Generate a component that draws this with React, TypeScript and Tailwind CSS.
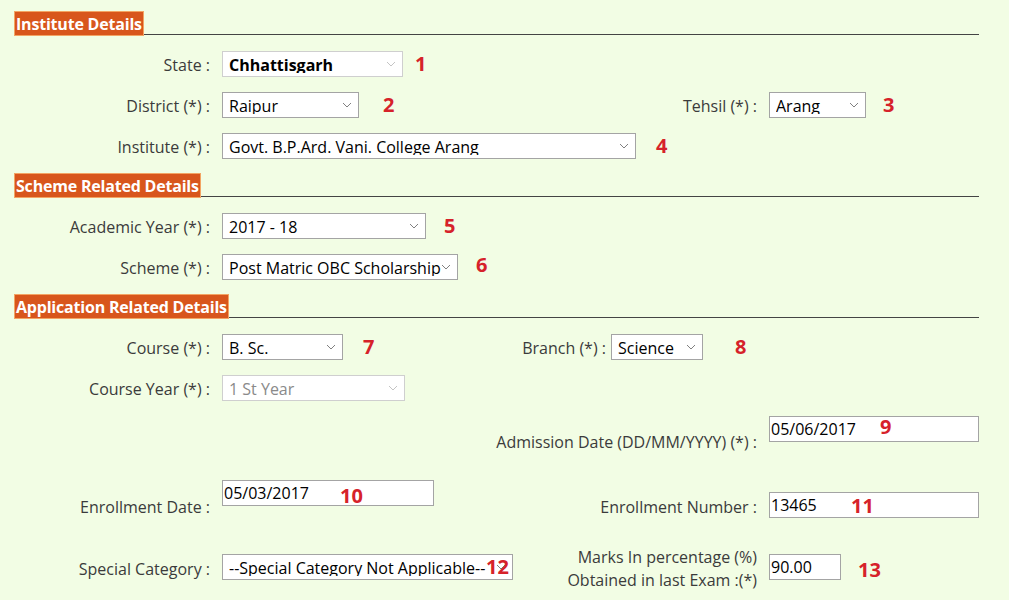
import React from 'react';

const FONT = { fontFamily: '"Open Sans", "Noto Sans", sans-serif' };

function SectionHeader({ title }: { title: string }) {
  return (
    <div className="flex items-end pl-[14px] pr-[30px]">
      <div className="h-[25px] px-[1px] flex items-center bg-[#d8561c] border border-[#f3a463] text-white font-bold text-[16px] tracking-[-0.2px] whitespace-nowrap">
        {title}
      </div>
      <div className="flex-1 border-b border-[#444] mb-[1px]" />
    </div>
  );
}

function Num({ n, className = '' }: { n: string; className?: string }) {
  return <span className={`text-[#d6222a] font-bold text-[20px] leading-none ${className}`}>{n}</span>;
}

function Select({
  value,
  width,
  bold = false,
  disabled = false,
  light = false,
}: {
  value: string;
  width: number;
  bold?: boolean;
  disabled?: boolean;
  light?: boolean;
}) {
  return (
    <div className="relative shrink-0" style={{ width }}>
      <select
        disabled={disabled}
        defaultValue={value}
        className={`appearance-none w-full h-[26px] pl-[6px] pr-[14px] pt-[1px] text-[16px] leading-none bg-white border outline-none ${
          light || disabled ? 'border-[#cfcfcf]' : 'border-[#a4a4a4]'
        } ${disabled ? 'text-[#8a8a8a] bg-[#f7f7f7]' : 'text-black'} ${bold ? 'font-bold' : ''}`}
        style={FONT}
      >
        <option>{value}</option>
      </select>
      <svg
        className="absolute right-[7px] top-[10px] pointer-events-none"
        width="10"
        height="6"
        viewBox="0 0 10 6"
      >
        <path d="M1 1 L5 5 L9 1" fill="none" stroke={light || disabled ? '#c4c4c4' : '#808080'} strokeWidth="1" />
      </svg>
    </div>
  );
}

function TextBox({ value, width }: { value: string; width: number }) {
  return (
    <input
      defaultValue={value}
      className="h-[26px] px-[1px] text-[16px] text-black bg-white border border-[#a4a4a4] outline-none shrink-0"
      style={{ ...FONT, width }}
    />
  );
}

function Label({ children, width = 210 }: { children: React.ReactNode; width?: number }) {
  return (
    <div className="shrink-0 text-right text-[16px] text-[#3b3b3b] whitespace-nowrap pt-[1px]" style={{ width }}>
      {children}
    </div>
  );
}

export default function App() {
  return (
    <div className="w-[1009px] h-[600px] overflow-hidden bg-[#f2fde4] pt-[11px]" style={FONT}>
      <SectionHeader title="Institute Details" />

      <div className="flex items-center mt-[15px] h-[26px]">
        <Label>State :</Label>
        <div className="ml-[12px] flex items-center">
          <Select value="Chhattisgarh" width={181} bold light />
          <Num n="1" className="ml-[12px]" />
        </div>
      </div>

      <div className="flex items-center mt-[15px] h-[26px]">
        <Label>District (*) :</Label>
        <div className="ml-[12px] flex items-center w-[323px]">
          <Select value="Raipur" width={137} />
          <Num n="2" className="ml-[24px]" />
        </div>
        <Label width={212}>Tehsil (*) :</Label>
        <div className="ml-[12px] flex items-center">
          <Select value="Arang" width={97} />
          <Num n="3" className="ml-[17px]" />
        </div>
      </div>

      <div className="flex items-center mt-[15px] h-[26px]">
        <Label>Institute (*) :</Label>
        <div className="ml-[12px] flex items-center">
          <Select value="Govt. B.P.Ard. Vani. College Arang" width={414} />
          <Num n="4" className="ml-[20px]" />
        </div>
      </div>

      <div className="mt-[14px]">
        <SectionHeader title="Scheme Related Details" />
      </div>

      <div className="flex items-center mt-[15px] h-[26px]">
        <Label>Academic Year (*) :</Label>
        <div className="ml-[12px] flex items-center">
          <Select value="2017 - 18" width={204} />
          <Num n="5" className="ml-[18px]" />
        </div>
      </div>

      <div className="flex items-center mt-[15px] h-[26px]">
        <Label>Scheme (*) :</Label>
        <div className="ml-[12px] flex items-center">
          <Select value="Post Matric OBC Scholarship" width={236} />
          <Num n="6" className="ml-[18px] -mt-[4px]" />
        </div>
      </div>

      <div className="mt-[14px]">
        <SectionHeader title="Application Related Details" />
      </div>

      <div className="flex items-center mt-[15px] h-[26px]">
        <Label>Course (*) :</Label>
        <div className="ml-[12px] flex items-center w-[264px]">
          <Select value="B. Sc." width={121} />
          <Num n="7" className="ml-[20px]" />
        </div>
        <Label width={120}>Branch (*) :</Label>
        <div className="ml-[5px] flex items-center">
          <Select value="Science" width={92} />
          <Num n="8" className="ml-[32px]" />
        </div>
      </div>

      <div className="flex items-center mt-[15px] h-[26px]">
        <Label>Course Year (*) :</Label>
        <div className="ml-[12px] flex items-center">
          <Select value="1 St Year" width={183} disabled />
        </div>
      </div>

      <div className="flex items-start mt-[15px] h-[26px]">
        <div className="w-[757px] shrink-0 text-right text-[16px] text-[#3b3b3b] pt-[14px] whitespace-nowrap">
          Admission Date (DD/MM/YYYY) (*) :
        </div>
        <div className="ml-[12px] relative">
          <TextBox value="05/06/2017" width={210} />
          <Num n="9" className="absolute left-[111px] top-[1px]" />
        </div>
      </div>

      <div className="flex items-start mt-[38px] h-[37px]">
        <div className="w-[210px] shrink-0 text-right text-[16px] text-[#3b3b3b] pt-[15px]">Enrollment Date :</div>
        <div className="ml-[12px] relative w-[323px]">
          <TextBox value="05/03/2017" width={212} />
          <Num n="10" className="absolute left-[118px] top-[6px]" />
        </div>
        <div className="w-[212px] shrink-0 text-right text-[16px] text-[#3b3b3b] pt-[15px] whitespace-nowrap">
          Enrollment Number :
        </div>
        <div className="ml-[12px] relative mt-[12px]">
          <TextBox value="13465" width={210} />
          <Num n="11" className="absolute left-[82px] top-[4px]" />
        </div>
      </div>

      <div className="flex items-start mt-[37px]">
        <div className="w-[210px] shrink-0 text-right text-[16px] text-[#3b3b3b] pt-[3px]">Special Category :</div>
        <div className="ml-[12px] relative w-[323px]">
          <Select value="--Special Category Not Applicable--" width={291} />
          <Num n="12" className="absolute left-[264px] top-[3px]" />
        </div>
        <div className="w-[212px] shrink-0 text-right text-[16px] leading-[23px] text-[#3b3b3b] -mt-[8px]">
          Marks In percentage (%)
          <br />
          Obtained in last Exam :(*)
        </div>
        <div className="ml-[12px] flex items-center">
          <TextBox value="90.00" width={72} />
          <Num n="13" className="ml-[17px] mt-[6px]" />
        </div>
      </div>
    </div>
  );
}
